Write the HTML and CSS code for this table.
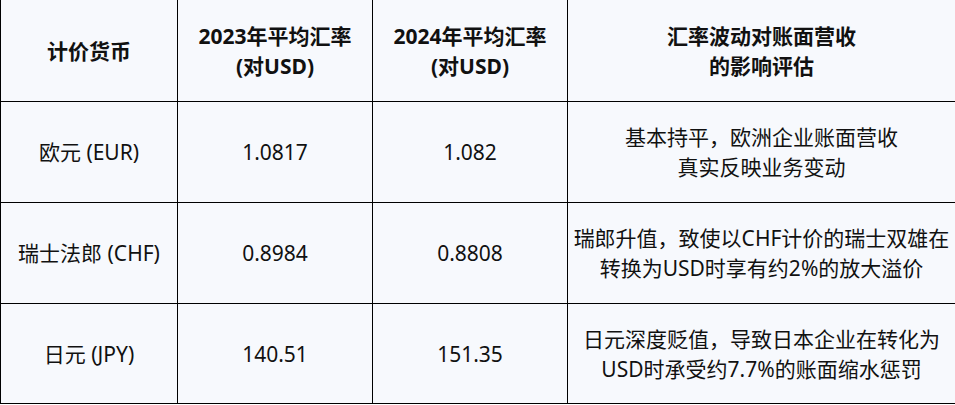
FILE: index.html
```html
<!DOCTYPE html>
<html lang="zh-CN">
<head>
<meta charset="utf-8">
<title>汇率对比</title>
<link rel="stylesheet" href="styles.css">
</head>
<body>
<div class="table">
  <div class="cell head">计价货币</div>
  <div class="cell head">2023年平均汇率<br>(对USD)</div>
  <div class="cell head">2024年平均汇率<br>(对USD)</div>
  <div class="cell head">汇率波动对账面营收<br>的影响评估</div>

  <div class="cell">欧元 (EUR)</div>
  <div class="cell">1.0817</div>
  <div class="cell">1.082</div>
  <div class="cell">基本持平，欧洲企业账面营收<br>真实反映业务变动</div>

  <div class="cell">瑞士法郎 (CHF)</div>
  <div class="cell">0.8984</div>
  <div class="cell">0.8808</div>
  <div class="cell">瑞郎升值，致使以CHF计价的瑞士双雄在<br>转换为USD时享有约2%的放大溢价</div>

  <div class="cell">日元 (JPY)</div>
  <div class="cell">140.51</div>
  <div class="cell">151.35</div>
  <div class="cell">日元深度贬值，导致日本企业在转化为<br>USD时承受约7.7%的账面缩水惩罚</div>
</div>
</body>
</html>
```

FILE: styles.css
```css
html, body {
  margin: 0;
  padding: 0;
  background: #ffffff;
}

body {
  font-family: "Noto Sans", "Noto Sans CJK SC", sans-serif;
  color: #111111;
}

.table {
  width: 955px;
  display: grid;
  grid-template-columns: 176px 194px 194px 1fr;
  grid-template-rows: 101px 100px 100px 99px;
  gap: 1px;
  padding: 0 0 1px 1px;
  box-sizing: border-box;
  background: #000000;
}

.cell {
  background: #f7f9fd;
  display: flex;
  align-items: center;
  justify-content: center;
  text-align: center;
  font-size: 21px;
  line-height: 30px;
  white-space: nowrap;
}

.head {
  font-weight: 700;
}
```
